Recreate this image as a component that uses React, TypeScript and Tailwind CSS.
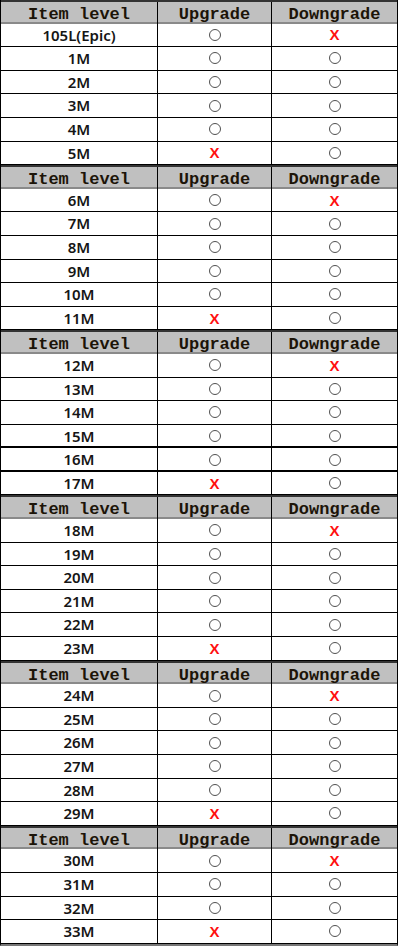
import React from "react";

type Mark = "o" | "x";
type Row = { level: string; up: Mark; down: Mark; thick?: boolean };

const groups: Row[][] = [
  [
    { level: "105L(Epic)", up: "o", down: "x" },
    { level: "1M", up: "o", down: "o" },
    { level: "2M", up: "o", down: "o" },
    { level: "3M", up: "o", down: "o" },
    { level: "4M", up: "o", down: "o" },
    { level: "5M", up: "x", down: "o" },
  ],
  [
    { level: "6M", up: "o", down: "x" },
    { level: "7M", up: "o", down: "o" },
    { level: "8M", up: "o", down: "o" },
    { level: "9M", up: "o", down: "o" },
    { level: "10M", up: "o", down: "o" },
    { level: "11M", up: "x", down: "o" },
  ],
  [
    { level: "12M", up: "o", down: "x" },
    { level: "13M", up: "o", down: "o" },
    { level: "14M", up: "o", down: "o" },
    { level: "15M", up: "o", down: "o", thick: true },
    { level: "16M", up: "o", down: "o", thick: true },
    { level: "17M", up: "x", down: "o" },
  ],
  [
    { level: "18M", up: "o", down: "x" },
    { level: "19M", up: "o", down: "o" },
    { level: "20M", up: "o", down: "o" },
    { level: "21M", up: "o", down: "o" },
    { level: "22M", up: "o", down: "o" },
    { level: "23M", up: "x", down: "o" },
  ],
  [
    { level: "24M", up: "o", down: "x" },
    { level: "25M", up: "o", down: "o" },
    { level: "26M", up: "o", down: "o" },
    { level: "27M", up: "o", down: "o" },
    { level: "28M", up: "o", down: "o" },
    { level: "29M", up: "x", down: "o" },
  ],
  [
    { level: "30M", up: "o", down: "x" },
    { level: "31M", up: "o", down: "o" },
    { level: "32M", up: "o", down: "o" },
    { level: "33M", up: "x", down: "o" },
  ],
];

function Symbol({ mark }: { mark: Mark }) {
  if (mark === "x")
    return (
      <span className="text-[15px] font-bold leading-none text-[#ff1010] [font-family:'Liberation_Sans',sans-serif]">
        X
      </span>
    );
  return <span className="inline-block h-[12px] w-[12px] rounded-full border-[1.5px] border-[#505050]" />;
}

function Header() {
  return (
    <div className="grid h-[23.6px] grid-cols-[157px_114px_125px] border-t-2 border-b-2 border-t-[#333] border-b-[#8a8a8a] bg-[#c0c0c0] text-[17px] font-bold text-[#1c1408] [font-family:'Liberation_Mono',monospace]">
      <div className="flex items-center justify-center border-r border-black">Item level</div>
      <div className="flex items-center justify-center border-r border-black">Upgrade</div>
      <div className="flex items-center justify-center">Downgrade</div>
    </div>
  );
}

function DataRow({ row }: { row: Row }) {
  return (
    <div
      className={`grid h-[23.6px] grid-cols-[157px_114px_125px] bg-white ${
        row.thick ? "border-b-2" : "border-b"
      } border-black`}
    >
      <div className="flex items-center justify-center border-r border-black text-[15px] font-semibold text-[#151515] [font-family:'Noto_Sans',sans-serif]">
        {row.level}
      </div>
      <div className="flex items-center justify-center border-r border-black">
        <Symbol mark={row.up} />
      </div>
      <div className="flex items-center justify-center">
        <Symbol mark={row.down} />
      </div>
    </div>
  );
}

export default function App() {
  return (
    <div className="h-[947px] w-[400px] bg-white">
      <div className="w-[398px] border-x border-b-2 border-black border-b-[#777]">
        {groups.map((g, i) => (
          <div key={i}>
            <Header />
            {g.map((r) => (
              <DataRow key={r.level} row={r} />
            ))}
          </div>
        ))}
      </div>
    </div>
  );
}
